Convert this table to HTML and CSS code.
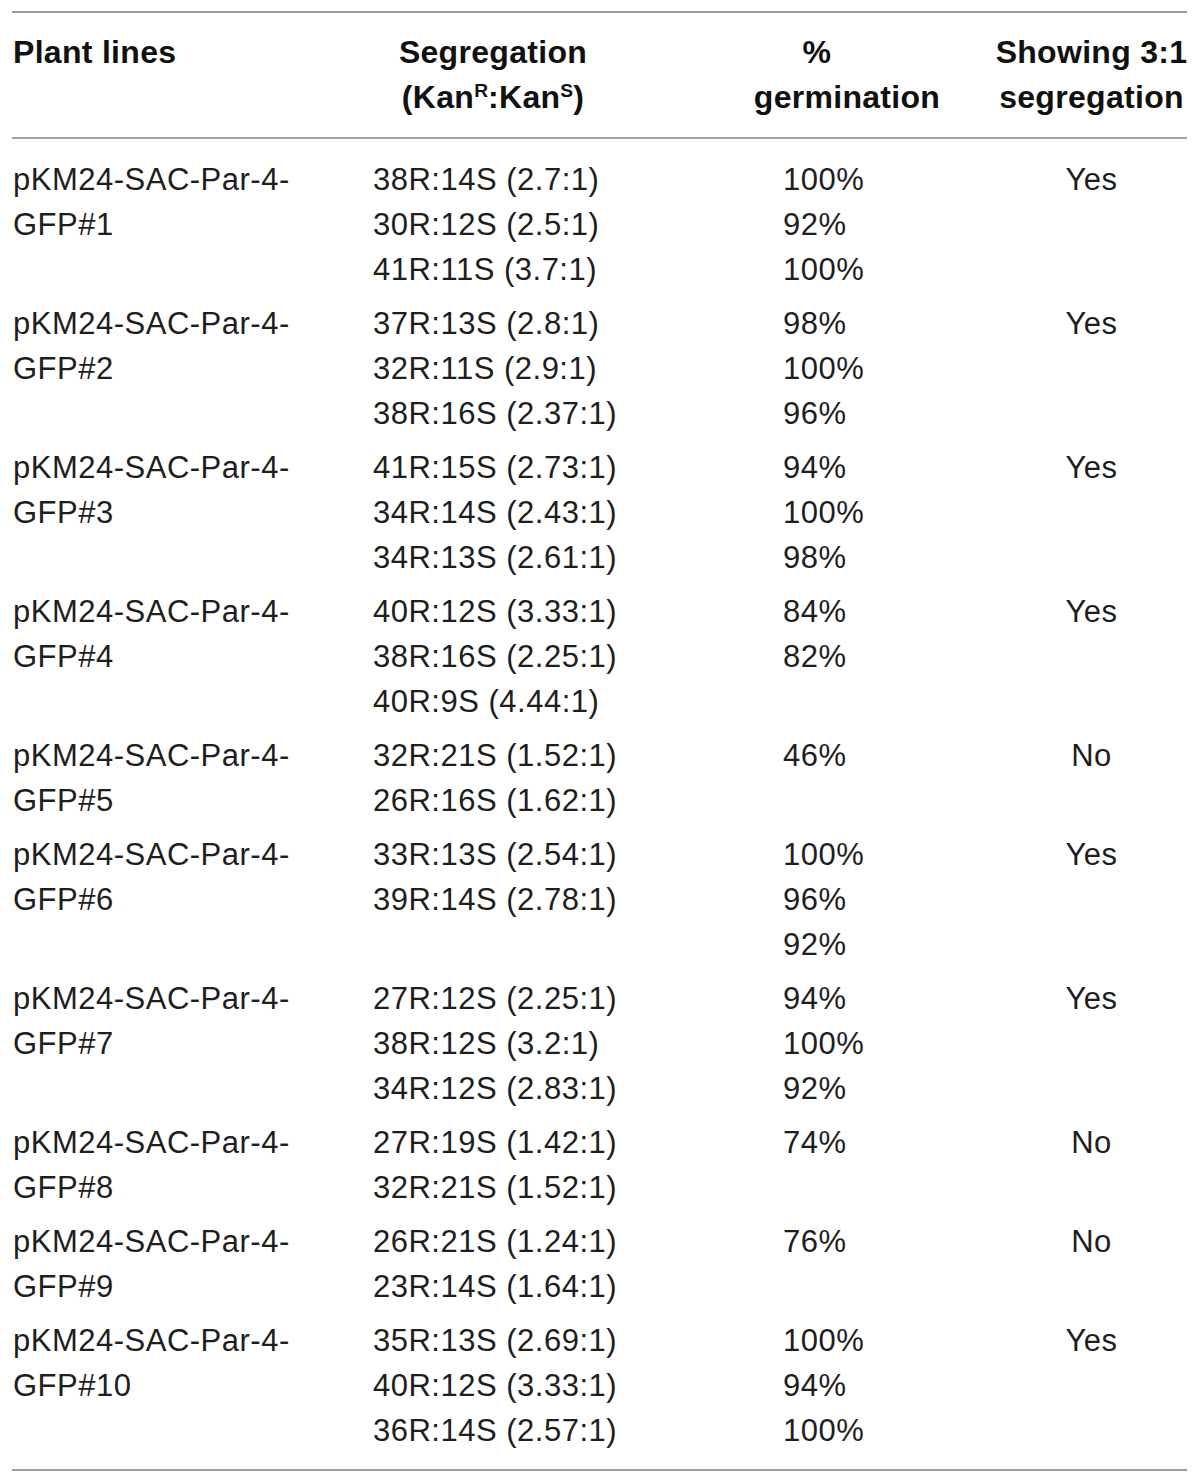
FILE: index.html
```html
<!DOCTYPE html>
<html>
<head>
<meta charset="utf-8">
<link rel="stylesheet" href="styles.css">
</head>
<body>
<div class="tbl">
  <div class="head">
    <div class="c1">Plant lines</div>
    <div class="c2"><div class="h2in">Segregation<br>(Kan<sup>R</sup>:Kan<sup>S</sup>)</div></div>
    <div class="c3"><div class="h3in"><span class="pct">%</span><span>germination</span></div></div>
    <div class="c4">Showing 3:1<br>segregation</div>
  </div>
  <div class="body">
    <div class="row">
      <div class="c1">pKM24-SAC-Par-4-<br>GFP#1</div>
      <div class="c2">38R:14S (2.7:1)<br>30R:12S (2.5:1)<br>41R:11S (3.7:1)</div>
      <div class="c3">100%<br>92%<br>100%</div>
      <div class="c4">Yes</div>
    </div>
    <div class="row">
      <div class="c1">pKM24-SAC-Par-4-<br>GFP#2</div>
      <div class="c2">37R:13S (2.8:1)<br>32R:11S (2.9:1)<br>38R:16S (2.37:1)</div>
      <div class="c3">98%<br>100%<br>96%</div>
      <div class="c4">Yes</div>
    </div>
    <div class="row">
      <div class="c1">pKM24-SAC-Par-4-<br>GFP#3</div>
      <div class="c2">41R:15S (2.73:1)<br>34R:14S (2.43:1)<br>34R:13S (2.61:1)</div>
      <div class="c3">94%<br>100%<br>98%</div>
      <div class="c4">Yes</div>
    </div>
    <div class="row">
      <div class="c1">pKM24-SAC-Par-4-<br>GFP#4</div>
      <div class="c2">40R:12S (3.33:1)<br>38R:16S (2.25:1)<br>40R:9S (4.44:1)</div>
      <div class="c3">84%<br>82%</div>
      <div class="c4">Yes</div>
    </div>
    <div class="row">
      <div class="c1">pKM24-SAC-Par-4-<br>GFP#5</div>
      <div class="c2">32R:21S (1.52:1)<br>26R:16S (1.62:1)</div>
      <div class="c3">46%</div>
      <div class="c4">No</div>
    </div>
    <div class="row">
      <div class="c1">pKM24-SAC-Par-4-<br>GFP#6</div>
      <div class="c2">33R:13S (2.54:1)<br>39R:14S (2.78:1)</div>
      <div class="c3">100%<br>96%<br>92%</div>
      <div class="c4">Yes</div>
    </div>
    <div class="row">
      <div class="c1">pKM24-SAC-Par-4-<br>GFP#7</div>
      <div class="c2">27R:12S (2.25:1)<br>38R:12S (3.2:1)<br>34R:12S (2.83:1)</div>
      <div class="c3">94%<br>100%<br>92%</div>
      <div class="c4">Yes</div>
    </div>
    <div class="row">
      <div class="c1">pKM24-SAC-Par-4-<br>GFP#8</div>
      <div class="c2">27R:19S (1.42:1)<br>32R:21S (1.52:1)</div>
      <div class="c3">74%</div>
      <div class="c4">No</div>
    </div>
    <div class="row">
      <div class="c1">pKM24-SAC-Par-4-<br>GFP#9</div>
      <div class="c2">26R:21S (1.24:1)<br>23R:14S (1.64:1)</div>
      <div class="c3">76%</div>
      <div class="c4">No</div>
    </div>
    <div class="row">
      <div class="c1">pKM24-SAC-Par-4-<br>GFP#10</div>
      <div class="c2">35R:13S (2.69:1)<br>40R:12S (3.33:1)<br>36R:14S (2.57:1)</div>
      <div class="c3">100%<br>94%<br>100%</div>
      <div class="c4">Yes</div>
    </div>
  </div>
</div>
</body>
</html>
```
FILE: styles.css
```css
html, body {
  margin: 0;
  padding: 0;
  background: #ffffff;
}
body {
  font-family: "Liberation Sans", Arial, Helvetica, sans-serif;
  font-size: 31px;
  line-height: 45px;
  color: #1e1e1e;
  letter-spacing: 0.5px;
}
.tbl {
  margin: 11px 0 0 12px;
  width: 1175px;
  border-top: 2px solid #9c9c9c;
  border-bottom: 2px solid #9c9c9c;
}
.head, .row {
  display: grid;
  grid-template-columns: 361px 410px 213px 191px;
}
.head {
  padding: 17px 0 17px 0;
  border-bottom: 2px solid #a4a4a4;
  font-weight: bold;
  font-size: 32px;
  color: #111;
  letter-spacing: 0.3px;
  white-space: nowrap;
}
.head .c4 {
  display: flex;
  flex-direction: column;
  align-items: center;
}
.body {
  padding: 18px 0 16px 0;
}
.row {
  padding-bottom: 9px;
}
.row:last-child {
  padding-bottom: 0;
}
.c1 {
  padding-left: 1px;
}
.c4 {
  text-align: center;
}
.h2in {
  width: 240px;
  text-align: center;
}
.h3in {
  display: flex;
  flex-direction: column;
  align-items: center;
  width: 190px;
  margin-left: -31px;
}
.pct {
  padding-right: 60px;
}
sup {
  font-size: 0.6em;
  line-height: 0;
  vertical-align: 0.55em;
  letter-spacing: 0;
}
```
